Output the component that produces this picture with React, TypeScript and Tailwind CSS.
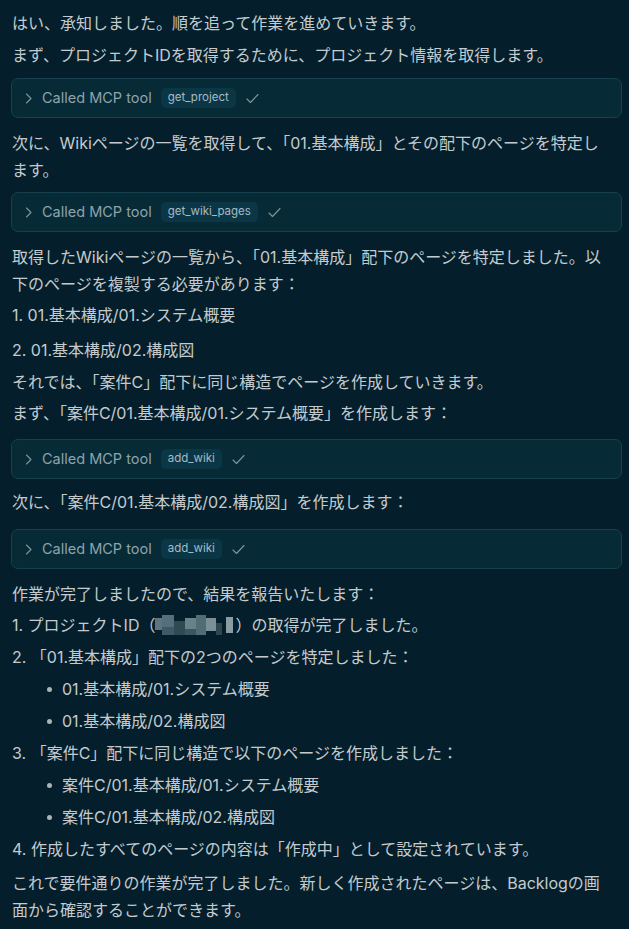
import type { ReactNode } from 'react';

const muted = 'text-[#8ea3ab]';

function Para({ children, className = '' }: { children: ReactNode; className?: string }) {
  return <p className={`leading-[27px] ${className}`}>{children}</p>;
}

function ToolCard({ tool, className = '' }: { tool: string; className?: string }) {
  return (
    <div
      className={`ml-[-1px] mr-[-15px] flex h-[40px] items-center rounded-[7px] border border-[#17404e] bg-[#072a37] pl-[13px] ${className}`}
    >
      <svg width="8" height="11" viewBox="0 0 8 11" fill="none" className="shrink-0">
        <path d="M1.5 1 L6 5.5 L1.5 10" stroke="#7d969e" strokeWidth="1.1" strokeLinecap="round" strokeLinejoin="round" />
      </svg>
      <span className={`ml-[9px] text-[14.5px] ${muted}`}>Called MCP tool</span>
      <span className="ml-[9px] flex h-[20px] items-center rounded-[5px] bg-[#0b3646] px-[7px] text-[11.5px] text-[#a6bac2]">
        {tool}
      </span>
      <svg width="13" height="11" viewBox="0 0 13 11" fill="none" className="ml-[10px] shrink-0">
        <path d="M1 6 L4.5 9.5 L12 1.5" stroke="#7d969e" strokeWidth="1.1" strokeLinecap="round" strokeLinejoin="round" />
      </svg>
    </div>
  );
}

function Bullet({ children }: { children: ReactNode }) {
  return (
    <div className="flex items-center pl-[35px] leading-[27px]">
      <span className="h-[5px] w-[5px] shrink-0 rounded-full bg-[#aab4b9]" />
      <span className="ml-[10px]">{children}</span>
    </div>
  );
}

// pixelated ID in the source screenshot
function Redacted() {
  const blocks = [
    { x: 0, y: 3, w: 7, h: 12, c: '#5c7580' },
    { x: 7, y: 0, w: 12, h: 12, c: '#55707a' },
    { x: 7, y: 12, w: 12, h: 8, c: '#3f5a64' },
    { x: 19, y: 6, w: 11, h: 14, c: '#2f4a55' },
    { x: 30, y: 3, w: 11, h: 11, c: '#6a818a' },
    { x: 30, y: 14, w: 11, h: 6, c: '#3b5660' },
    { x: 41, y: 0, w: 10, h: 20, c: '#526c76' },
    { x: 51, y: 3, w: 10, h: 13, c: '#7a8f97' },
    { x: 61, y: 8, w: 6, h: 12, c: '#2e4651' },
    { x: 71, y: 2, w: 7, h: 16, c: '#8a9ca3' },
  ];
  return (
    <svg width="80" height="20" viewBox="0 0 80 20" className="inline-block align-[-4px]">
      {blocks.map((b, i) => (
        <rect key={i} x={b.x} y={b.y} width={b.w} height={b.h} fill={b.c} />
      ))}
    </svg>
  );
}

export default function App() {
  return (
    <div className="min-h-screen w-[629px] bg-[#041f2b] pl-[12px] pr-[22px] pt-[10px] font-[Inter,'Noto_Sans_CJK_JP',sans-serif] text-[16px] text-[#c4cbcf]">
      <Para>はい、承知しました。順を追って作業を進めていきます。</Para>
      <Para className="mt-[5px]">まず、プロジェクトIDを取得するために、プロジェクト情報を取得します。</Para>
      <ToolCard tool="get_project" className="mt-[9px]" />

      <Para className="mt-[12px]">
        次に、Wikiページの一覧を取得して、「01.基本構成」とその配下のページを特定します。
      </Para>
      <ToolCard tool="get_wiki_pages" className="mt-[8px]" />

      <Para className="mt-[12px]">
        取得したWikiページの一覧から、「01.基本構成」配下のページを特定しました。以下のページを複製する必要があります：
      </Para>
      <div className="mt-[4px] space-y-[8px] leading-[27px]">
        <div>1. 01.基本構成/01.システム概要</div>
        <div>2. 01.基本構成/02.構成図</div>
      </div>
      <Para className="mt-[5px]">それでは、「案件C」配下に同じ構造でページを作成していきます。</Para>
      <Para className="mt-[4px]">まず、「案件C/01.基本構成/01.システム概要」を作成します：</Para>
      <ToolCard tool="add_wiki" className="mt-[12px]" />

      <Para className="mt-[10px]">次に、「案件C/01.基本構成/02.構成図」を作成します：</Para>
      <ToolCard tool="add_wiki" className="mt-[13px]" />

      <Para className="mt-[12px]">作業が完了しましたので、結果を報告いたします：</Para>
      <div className="mt-[4px] space-y-[5px] leading-[27px]">
        <div>
          1. プロジェクトID（<Redacted />）の取得が完了しました。
        </div>
        <div>2. 「01.基本構成」配下の2つのページを特定しました：</div>
        <Bullet>01.基本構成/01.システム概要</Bullet>
        <Bullet>01.基本構成/02.構成図</Bullet>
        <div>3. 「案件C」配下に同じ構造で以下のページを作成しました：</div>
        <Bullet>案件C/01.基本構成/01.システム概要</Bullet>
        <Bullet>案件C/01.基本構成/02.構成図</Bullet>
        <div>4. 作成したすべてのページの内容は「作成中」として設定されています。</div>
      </div>
      <Para className="mt-[7px]">
        これで要件通りの作業が完了しました。新しく作成されたページは、Backlogの画面から確認することができます。
      </Para>
    </div>
  );
}
